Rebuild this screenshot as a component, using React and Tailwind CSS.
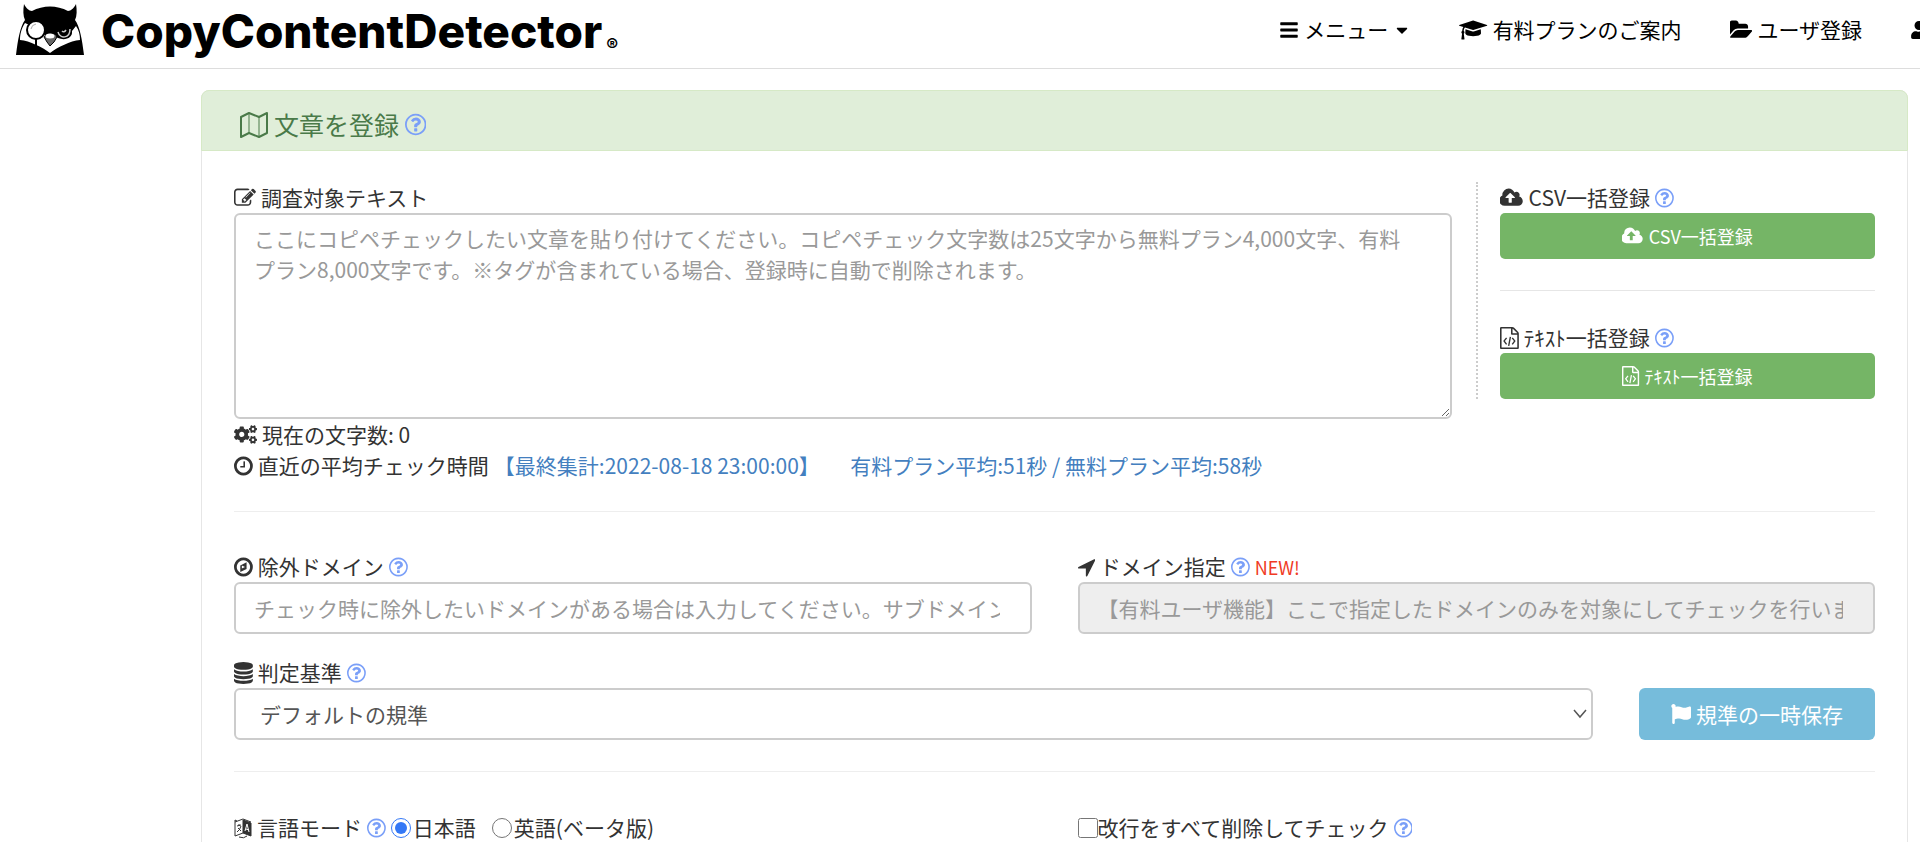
import { FaBars, FaCaretDown, FaCogs, FaFlag, FaUser } from 'react-icons/fa';

const RING =
  'M1440 896q0-148-73-273t-198-198-273-73-273 73-198 198-73 273 73 273 198 198 273 73 273-73 198-198 73-273zm224 0q0 209-103 385.5t-279.5 279.5-385.5 103-385.5-103-279.5-279.5-103-385.5 103-385.5 279.5-279.5 385.5-103 385.5 103 279.5 279.5 103 385.5z';

const glyphs = {
  edit: {
    box: '0 0 1792 1792',
    d: 'M888 1184l116-116-152-152-116 116v56h96v96h56zm440-720q-16-16-33 1l-350 350q-17 17-1 33t33-1l350-350q17-17 1-33zm80 594v190q0 119-84.5 203.5t-203.5 84.5h-832q-119 0-203.5-84.5t-84.5-203.5v-832q0-119 84.5-203.5t203.5-84.5h832q63 0 117 25 15 7 18 23 3 17-9 29l-49 49q-14 14-32 8-23-6-45-6h-832q-66 0-113 47t-47 113v832q0 66 47 113t113 47h832q66 0 113-47t47-113v-126q0-13 9-22l64-64q15-15 35-7t20 29zm-96-738l288 288-672 672h-288v-288zm444 132l-92 92-288-288 92-92q28-28 68-28t68 28l152 152q28 28 28 68t-28 68z',
  },
  clock: {
    box: '128 0 1536 1792',
    d: 'M1024 544v448q0 14-9 23t-23 9h-320q-14 0-23-9t-9-23v-64q0-14 9-23t23-9h224v-352q0-14 9-23t23-9h64q14 0 23 9t9 23z' + RING,
  },
  compass: {
    box: '128 0 1536 1792',
    d: 'M768 1024l256-128-256-128zM1152 512v542l-512 256v-542z' + RING,
  },
  database: {
    box: '128 0 1536 1792',
    d: 'M896 768q237 0 443-43t325-127v170q0 69-103 128t-280 93.5-385 34.5-385-34.5-280-93.5-103-128v-170q119 84 325 127t443 43zm0 768q237 0 443-43t325-127v170q0 69-103 128t-280 93.5-385 34.5-385-34.5-280-93.5-103-128v-170q119 84 325 127t443 43zm0-384q237 0 443-43t325-127v170q0 69-103 128t-280 93.5-385 34.5-385-34.5-280-93.5-103-128v-170q119 84 325 127t443 43zm0-1152q208 0 385 34.5t280 93.5 103 128v128q0 69-103 128t-280 93.5-385 34.5-385-34.5-280-93.5-103-128v-128q0-69 103-128t280-93.5 385-34.5z',
  },
  arrow: {
    box: '192 0 1408 1792',
    d: 'M1593 349l-640 1280q-17 35-57 35-5 0-15-2-22-5-35.5-22.5t-13.5-39.5v-576h-576q-22 0-39.5-13.5t-22.5-35.5 4-42 29-30l1280-640q13-7 29-7 27 0 45 19 15 14 18.5 34.5t-6.5 39.5z',
  },
  folder: {
    box: '0 0 1856 1792',
    d: 'M1815 952q0 31-31 66l-336 396q-43 51-120.5 86.5t-143.5 35.5h-1088q-34 0-60.5-13t-26.5-43q0-31 31-66l336-396q43-51 120.5-86.5t143.5-35.5h1088q34 0 60.5 13t26.5 43zm-343-344v160h-832q-94 0-197 47.5t-164 119.5l-337 396-5 6q0-4-.5-12.5t-.5-12.5v-960q0-92 66-158t158-66h320q92 0 158 66t66 158v32h544q92 0 158 66t66 158z',
  },
  cap: {
    box: '0 0 2304 1792',
    d: 'M1774 836l18 316q4 69-82 128t-235 93.5-323 34.5-323-34.5-235-93.5-82-128l18-316 574 181q22 7 48 7t48-7zm530-324q0 23-22 31l-1120 352q-4 1-10 1t-10-1l-652-206q-43 34-71 111.5t-34 178.5q63 36 63 109 0 69-58 107l58 433q2 14-8 25-9 11-24 11h-192q-15 0-24-11-10-11-8-25l58-433q-58-38-58-107 0-73 65-111 11-207 98-330l-333-104q-22-8-22-31t22-31l1120-352q4-1 10-1t10 1l1120 352q22 8 22 31z',
  },
  upload: {
    box: '0 0 1920 1792',
    d: 'M1216 864q0-14-9-23l-352-352q-9-9-23-9t-23 9l-351 351q-10 12-10 24 0 14 9 23t23 9h224v352q0 13 9.5 22.5t22.5 9.5h192q13 0 22.5-9.5t9.5-22.5v-352h224q13 0 22.5-9.5t9.5-22.5zm640 288q0 159-112.5 271.5t-271.5 112.5h-1088q-185 0-316.5-131.5t-131.5-316.5q0-130 70-240t188-165q-2-30-2-43 0-212 150-362t362-150q156 0 285.5 87t188.5 231q71-62 166-62 106 0 181 75t75 181q0 76-41 138 130 31 213.5 135.5t83.5 238.5z',
  },
  code: {
    box: '128 0 1536 1792',
    d: 'M1596 380q28 28 48 76t20 88v1152q0 40-28 68t-68 28h-1344q-40 0-68-28t-28-68v-1600q0-40 28-68t68-28h896q40 0 88 20t76 48zm-444-244v376h376q-10-29-22-41l-313-313q-12-12-41-22zm384 1528v-1024h-416q-40 0-68-28t-28-68v-416h-768v1536h1280zM620 850l90 70-180 230 180 230-90 70-230-300zM1172 850l-90 70 180 230-180 230 90 70 230-300zM920 800l110 20-140 720-110-20z',
  },
  question: {
    box: '128 0 1536 1792',
    d: 'M1008 1200v160q0 14-9 23t-23 9h-160q-14 0-23-9t-9-23v-160q0-14 9-23t23-9h160q14 0 23 9t9 23zm256-496q0 50-15 90t-45.5 69-52 44-59.5 36q-32 18-46.5 28t-26 24-11.5 29v32q0 14-9 23t-23 9h-160q-14 0-23-9t-9-23v-68q0-35 10.5-64.5t24-47.5 39-35.5 41-25.5 44.5-21q53-25 75-43t22-49q0-42-43.5-71.5t-95.5-29.5q-56 0-95 27-29 20-80 83-9 12-25 12-11 0-19-6l-108-82q-10-7-12-20t5-23q122-192 349-192 129 0 238.5 89.5t109.5 214.5zm-368-448q-130 0-248.5 51t-204 136.5-136.5 204-51 248.5 51 248.5 136.5 204 204 136.5 248.5 51 248.5-51 204-136.5 136.5-204 51-248.5-51-248.5-136.5-204-204-136.5-248.5-51zm768 640q0 209-103 385.5t-279.5 279.5-385.5 103-385.5-103-279.5-279.5-103-385.5 103-385.5 279.5-279.5 385.5-103 385.5 103 279.5 279.5 103 385.5z',
  },
};

function Icon({ name, className = 'h-[22px]' }) {
  const { box, d } = glyphs[name];
  return (
    <svg viewBox={box} fill="currentColor" aria-hidden="true" className={`w-auto shrink-0 ${className}`}>
      <path d={d} />
    </svg>
  );
}

function MapIcon() {
  return (
    <svg viewBox="0 0 28 28" fill="none" stroke="currentColor" aria-hidden="true" className="size-7 shrink-0">
      <path strokeWidth="2" strokeLinejoin="round" d="M1 6l8-4 10 4 8-4v20l-8 4-10-4-8 4z" />
      <path strokeWidth="1" d="M9 3v19M19 6v19" />
    </svg>
  );
}

function LanguageIcon() {
  return (
    <svg viewBox="0 0 18 22" fill="none" stroke="currentColor" aria-hidden="true" className="h-[22px] w-[18px] shrink-0">
      <path strokeWidth="1" d="M9 16l-8 3V5l8-3M1 5V3l2 1M9 2l8 3M5 20q5 2 8-1" />
      <path strokeWidth="1" d="M3 9l4-1M5 7v2M7 9q-1 4-4 6M4 11l3 3" />
      <path fill="currentColor" strokeWidth="1" d="M9 3l8 3v13l-8-3z" />
      <path stroke="#fff" strokeWidth="1" d="M11 14l2-7 2 8M12 12l3 1" />
    </svg>
  );
}

function Owl() {
  return (
    <svg viewBox="15 3 70 53" aria-hidden="true" className="h-[53px] w-[70px] shrink-0">
      <path d="M24 4C26 8 29 11 32 11C43 5 57 5 68 11C71 11 74 8 76 4C77 10 77 16 75 20C80 27 82 39 84 55H16C18 39 20 27 25 20C23 16 23 10 24 4Z" />
      <path fill="#fff" d="M25 23C21 29 20 35 20 40C30 41 42 47 50 53C58 47 70 41 80 40C80 35 79 30 76 26L72 31C73 38 65 41 58 38L54 36L46 36L40 30Z" />
      <circle cx="36" cy="30" r="9" fill="#fff" stroke="#000" strokeWidth="2" />
      <path d="M31 29a6 6 0 0 1 5-5" fill="none" stroke="#aaa" strokeWidth="1" />
      <path d="M36 39v7" stroke="#000" strokeWidth="2" />
      <path d="M57 31C57 40 71 41 72 30L67 25Z" />
      <path d="M58 32C60 39 70 39 70 29M62 31q2 2 4-1" fill="none" stroke="#ccc" strokeWidth="1.5" />
      <path d="M44 37C46 32 56 32 57 37L54 42L50 46L47 42Z" fill="#666" stroke="#000" strokeWidth="1" />
      <ellipse cx="50" cy="36" rx="4.5" ry="2.5" fill="#fff" />
    </svg>
  );
}

function Help({ className = 'h-[22px]' }) {
  return (
    <a href="#help" aria-label="ヘルプ" className="text-[#7a9ff8]">
      <Icon name="question" className={className} />
    </a>
  );
}

function Label({ icon, htmlFor, help = true, children }) {
  return (
    <div className="flex items-center gap-[5px]">
      {icon}
      <label htmlFor={htmlFor}>{children}</label>
      {help && <Help />}
    </div>
  );
}

const field = 'block w-full rounded-md border-2 border-[#ccc] placeholder:text-[#999] placeholder:opacity-100';

export default function App() {
  return (
    <div className="min-h-screen overflow-x-hidden bg-white font-['Noto_Sans_CJK_JP',sans-serif] text-[21px] leading-[31px] text-[#333]">
      <header className="flex h-[69px] items-start overflow-hidden border-b border-[#ddd] pl-[15px] text-black">
        <a href="#top" className="flex shrink-0 gap-4 pt-[3px]">
          <Owl />
          <span className="flex items-end font-['Inter',sans-serif] text-[46px] leading-[56px] font-extrabold">
            CopyContentDetector
            <span className="pl-1 text-lg leading-7">®</span>
          </span>
        </a>
        <nav className="-mr-2 ml-auto flex shrink-0 items-center gap-12 pt-[14px]">
          <button type="button" className="flex items-center gap-[5px]">
            <FaBars className="size-5" />
            メニュー
            <FaCaretDown className="size-[18px]" />
          </button>
          <a href="#plan" className="flex items-center gap-[5px]">
            <Icon name="cap" />
            有料プランのご案内
          </a>
          <a href="#signup" className="flex items-center gap-[5px]">
            <Icon name="folder" />
            ユーザ登録
          </a>
          <a href="#login" aria-label="ログイン">
            <FaUser className="size-[18px]" />
          </a>
        </nav>
      </header>

      <main className="mt-[21px] mr-3 ml-[201px] rounded-lg border border-[#e6e6e6]">
        <h1 className="-mx-px -mt-px flex h-[61px] items-center gap-[6px] rounded-t-lg border border-[#d6e9c6] bg-[#e0eed9] px-[38px] pt-2 text-[25px] text-[#4a7a49]">
          <MapIcon />
          文章を登録
          <Help className="h-[25px]" />
        </h1>

        <form className="px-8 pt-[31px] pb-8">
          <div className="flex items-start gap-6">
            <div className="min-w-0 flex-1">
              <Label htmlFor="text" icon={<Icon name="edit" />} help={false}>調査対象テキスト</Label>
              <textarea
                id="text"
                className={`${field} h-[206px] py-2 pr-9 pl-[18px]`}
                placeholder="ここにコピペチェックしたい文章を貼り付けてください。コピペチェック文字数は25文字から無料プラン4,000文字、有料プラン8,000文字です。※タグが含まれている場合、登録時に自動で削除されます。"
              />
              <p className="flex items-center gap-[5px]">
                <FaCogs className="size-[23px]" />
                現在の文字数: 0
              </p>
              <p className="flex items-center gap-[5px]">
                <Icon name="clock" />
                直近の平均チェック時間
                <span className="text-[#447fbf]">【最終集計:2022-08-18 23:00:00】&nbsp;　&nbsp;有料プラン平均:51秒 / 無料プラン平均:58秒</span>
              </p>
            </div>

            <aside className="w-[399px] shrink-0 border-l-2 border-dotted border-[#ccc] pl-[22px]">
              <Label htmlFor="csv" icon={<Icon name="upload" />}>CSV一括登録</Label>
              <button id="csv" type="button" className="flex h-[46px] w-full items-center justify-center gap-[5px] rounded-[5px] bg-[#75b566] text-lg text-white">
                <Icon name="upload" className="h-[20px]" />
                CSV一括登録
              </button>
              <hr className="my-[31px] border-[#e6e6e6]" />
              <Label htmlFor="txt" icon={<Icon name="code" />}>ﾃｷｽﾄ一括登録</Label>
              <button id="txt" type="button" className="flex h-[46px] w-full items-center justify-center gap-[5px] rounded-[5px] bg-[#75b566] text-lg text-white">
                <Icon name="code" className="h-[20px]" />
                ﾃｷｽﾄ一括登録
              </button>
            </aside>
          </div>

          <hr className="mt-[30px] mb-[39px] border-[#eee]" />

          <div className="grid grid-cols-2 gap-[46px]">
            <div>
              <Label htmlFor="exclude" icon={<Icon name="compass" />}>除外ドメイン</Label>
              <input
                id="exclude"
                className={`${field} h-[52px] pr-[30px] pl-[18px]`}
                placeholder="チェック時に除外したいドメインがある場合は入力してください。サブドメインも対象です。"
              />
            </div>
            <div>
              <div className="flex items-center gap-[5px]">
                <Label htmlFor="only" icon={<Icon name="arrow" />}>ドメイン指定</Label>
                <span className="text-lg text-[#f03a24]">NEW!</span>
              </div>
              <input
                id="only"
                disabled
                className={`${field} h-[52px] bg-[#eee] pr-[30px] pl-[18px]`}
                placeholder="【有料ユーザ機能】ここで指定したドメインのみを対象にしてチェックを行います。"
              />
            </div>
          </div>

          <div className="mt-[23px] flex items-end gap-[46px]">
            <div className="min-w-0 flex-1">
              <Label htmlFor="standard" icon={<Icon name="database" />}>判定基準</Label>
              <div className="relative">
                <select id="standard" className={`${field} h-[52px] appearance-none bg-white px-6 text-[#555]`}>
                  <option>デフォルトの規準</option>
                </select>
                <svg viewBox="0 0 14 10" fill="none" stroke="#555" strokeWidth="1.5" className="pointer-events-none absolute top-[21px] right-[6px] h-[10px] w-[14px]">
                  <path d="M1 1l6 7 6-7" />
                </svg>
              </div>
            </div>
            <button type="button" className="flex h-[52px] w-[236px] shrink-0 items-center justify-center gap-[5px] rounded-md bg-[#76bcdb] text-white">
              <FaFlag className="size-5" />
              規準の一時保存
            </button>
          </div>

          <hr className="mt-[31px] mb-10 border-[#eee]" />

          <div className="grid grid-cols-2 gap-[46px]">
            <fieldset className="flex items-center">
              <legend className="float-left flex items-center gap-[5px]">
                <LanguageIcon />
                言語モード
                <Help />
              </legend>
              <label className="ml-[5px] flex items-center gap-[2px]">
                <input type="radio" name="lang" defaultChecked className="size-5 accent-[#3478f6]" />
                日本語
              </label>
              <label className="ml-4 flex items-center gap-[2px]">
                <input type="radio" name="lang" className="size-5 accent-[#3478f6]" />
                英語(ベータ版)
              </label>
            </fieldset>
            <div className="flex items-center gap-[5px]">
              <label className="flex items-center">
                <input type="checkbox" className="size-5" />
                改行をすべて削除してチェック
              </label>
              <Help />
            </div>
          </div>
        </form>
      </main>
    </div>
  );
}
